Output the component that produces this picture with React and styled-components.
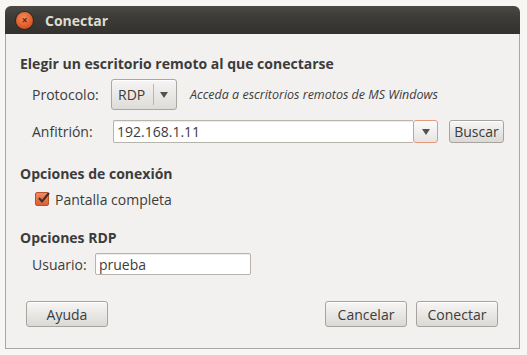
import React, { useState } from "react";
import styled, { createGlobalStyle } from "styled-components";

const GlobalStyle = createGlobalStyle`
  body {
    margin: 0;
    background: #f7f6f5;
    font-family: "Open Sans", "Liberation Sans", sans-serif;
    font-size: 14px;
    color: #3c3c3c;
  }
`;

const Page = styled.div`
  width: 527px;
  height: 355px;
  padding: 6px 0 0 5px;
  box-sizing: border-box;
`;

const Window = styled.div`
  width: 515px;
  height: 343px;
  display: flex;
  flex-direction: column;
`;

const TitleBar = styled.div`
  height: 28px;
  flex: none;
  display: flex;
  align-items: center;
  padding-left: 11px;
  gap: 12px;
  border-radius: 6px 6px 0 0;
  background: linear-gradient(#4a4944, #3c3b37 40%, #33322e);
`;

const CloseButton = styled.div`
  width: 17px;
  height: 17px;
  border-radius: 50%;
  background: radial-gradient(circle at 45% 35%, #f68a5c, #e25a26 60%, #c2441a);
  box-shadow: 0 0 0 1px #2b2a27;
  display: flex;
  align-items: center;
  justify-content: center;
  color: #5b2512;
  font-size: 10px;
  font-weight: bold;
  line-height: 1;
`;

const Title = styled.div`
  color: #dfdbd2;
  font-weight: bold;
  font-size: 14px;
`;

const Body = styled.div`
  flex: 1;
  background: #f2f1f0;
  border: 1px solid #a9a7a2;
  border-top: none;
  padding: 0 14px 0 14px;
  display: flex;
  flex-direction: column;
`;

const Heading = styled.div`
  margin-top: ${(p) => p.$top}px;
  font-weight: bold;
  line-height: 18px;
  height: 18px;
`;

const Row = styled.div`
  margin-top: ${(p) => p.$top}px;
  display: flex;
  align-items: center;
  padding-left: ${(p) => p.$indent || 12}px;
  height: ${(p) => p.$height}px;
`;

const Label = styled.div`
  width: ${(p) => (p.$width ? `${p.$width}px` : "auto")};
  flex: none;
`;

const Combo = styled.div`
  height: 31px;
  width: 66px;
  box-sizing: border-box;
  border: 1px solid #aaa7a1;
  border-radius: 3px;
  background: linear-gradient(#f6f5f4, #dedcd8);
  display: flex;
  align-items: center;
  box-shadow: inset 0 1px 0 #fff;
`;

const ComboText = styled.div`
  padding-left: 6px;
  width: 35px;
`;

const Separator = styled.div`
  width: 1px;
  height: 21px;
  background: #b9b6b1;
  margin-right: 6px;
`;

const Arrow = styled.div`
  width: 0;
  height: 0;
  border-left: 4.5px solid transparent;
  border-right: 4.5px solid transparent;
  border-top: 6px solid #55524d;
`;

const Hint = styled.div`
  font-style: italic;
  font-size: 12.5px;
  margin-left: 13px;
`;

const EntryWrap = styled.div`
  display: flex;
  height: 23px;
`;

const Entry = styled.input`
  width: ${(p) => p.$width}px;
  height: ${(p) => p.$height || 23}px;
  box-sizing: border-box;
  border: 1px solid #b7b3ad;
  border-radius: ${(p) => (p.$joined ? "2px 0 0 2px" : "2px")};
  border-right: ${(p) => (p.$joined ? "none" : "1px solid #b7b3ad")};
  background: #fff;
  font-family: inherit;
  font-size: 14px;
  color: #3c3c3c;
  padding: 0 3px;
  outline: none;
  box-shadow: inset 0 1px 1px rgba(0, 0, 0, 0.08);
`;

const DropButton = styled.div`
  width: 25px;
  height: 23px;
  box-sizing: border-box;
  border: 1px solid #e5997c;
  border-radius: 3px;
  background: linear-gradient(#fbfbfa, #e6e4e1);
  display: flex;
  align-items: center;
  justify-content: center;
`;

const Button = styled.button`
  height: ${(p) => p.$height || 26}px;
  width: ${(p) => p.$width}px;
  margin-left: ${(p) => p.$left || 0}px;
  box-sizing: border-box;
  border: 1px solid #a7a49f;
  border-radius: 3px;
  background: linear-gradient(#f7f6f5, #dbd9d5);
  box-shadow: inset 0 1px 0 #fff;
  font-family: inherit;
  font-size: 14px;
  color: #3c3c3c;
  padding: 0;
`;

const Check = styled.div`
  width: 14px;
  height: 14px;
  box-sizing: border-box;
  border: 1px solid #b9512a;
  border-radius: 2px;
  background: linear-gradient(#f08a60, #dc5f33);
  margin-right: 6px;
  position: relative;
`;

const CheckMark = styled.svg`
  position: absolute;
  left: 1px;
  top: -2px;
`;

const Footer = styled.div`
  margin-top: 26px;
  display: flex;
  align-items: center;
  padding: 0 7px 0 6px;
`;

const Spacer = styled.div`
  flex: 1;
`;

export default function App() {
  const [host, setHost] = useState("192.168.1.11");
  const [user, setUser] = useState("prueba");

  return (
    <Page>
      <GlobalStyle />
      <Window>
        <TitleBar>
          <CloseButton>×</CloseButton>
          <Title>Conectar</Title>
        </TitleBar>
        <Body>
          <Heading $top={21}>Elegir un escritorio remoto al que conectarse</Heading>
          <Row $top={6} $height={31}>
            <Label $width={79}>Protocolo:</Label>
            <Combo>
              <ComboText>RDP</ComboText>
              <Separator />
              <Arrow />
            </Combo>
            <Hint>Acceda a escritorios remotos de MS Windows</Hint>
          </Row>
          <Row $top={10} $height={23}>
            <Label $width={81}>Anfitrión:</Label>
            <EntryWrap>
              <Entry
                $width={300}
                $joined
                value={host}
                onChange={(e) => setHost(e.target.value)}
              />
              <DropButton>
                <Arrow />
              </DropButton>
            </EntryWrap>
            <Button $width={55} $height={23} $left={11}>
              Buscar
            </Button>
          </Row>
          <Heading $top={22}>Opciones de conexión</Heading>
          <Row $top={7} $height={18} $indent={15}>
            <Check>
              <CheckMark width="14" height="14" viewBox="0 0 14 14">
                <path
                  d="M2 7 L5 10.5 L12 2"
                  fill="none"
                  stroke="#3b2f2a"
                  strokeWidth="2"
                />
              </CheckMark>
            </Check>
            Pantalla completa
          </Row>
          <Heading $top={21}>Opciones RDP</Heading>
          <Row $top={6} $height={22}>
            <Label $width={63}>Usuario:</Label>
            <Entry
              $width={156}
              $height={22}
              value={user}
              onChange={(e) => setUser(e.target.value)}
            />
          </Row>
          <Footer>
            <Button $width={82}>Ayuda</Button>
            <Spacer />
            <Button $width={82}>Cancelar</Button>
            <Button $width={82} $left={9}>
              Conectar
            </Button>
          </Footer>
        </Body>
      </Window>
    </Page>
  );
}
